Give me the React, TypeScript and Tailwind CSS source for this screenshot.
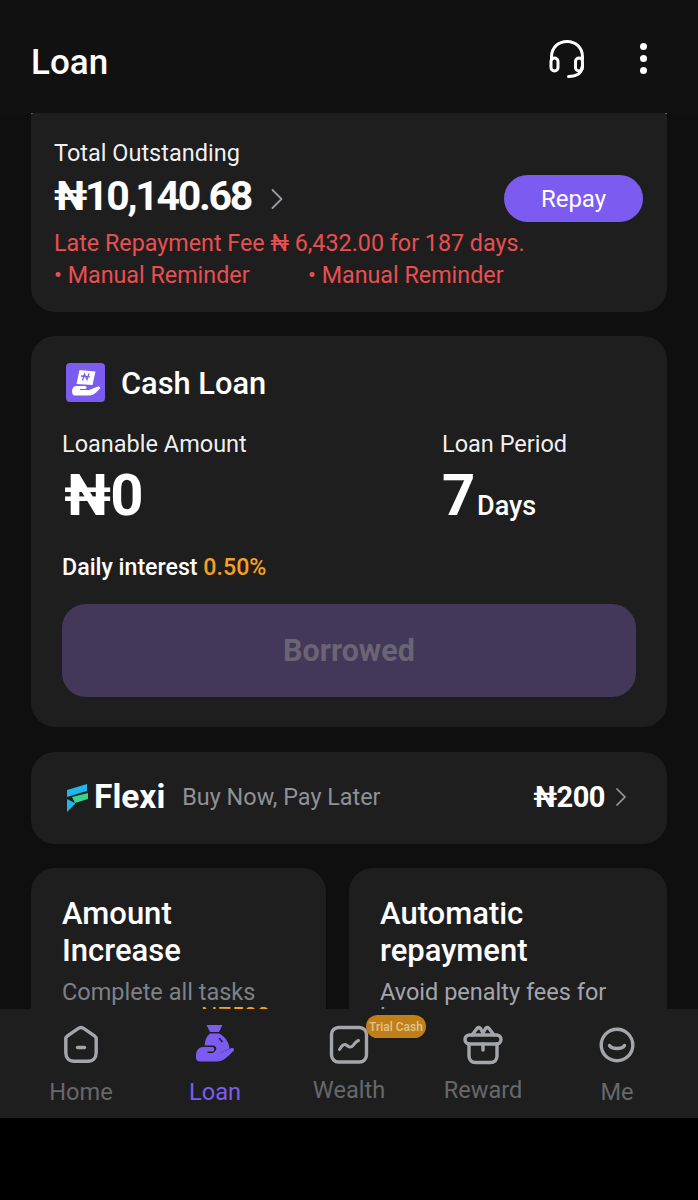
import { ChevronRight } from "lucide-react";

const tabs = [
  { label: "Home", icon: <HomeIcon />, labelClass: "mt-[12px] text-[#66686b]" },
  { label: "Loan", icon: <LoanIcon />, labelClass: "mt-[12px] text-[#7c5cf0]" },
  { label: "Wealth", icon: <WealthIcon />, labelClass: "mt-[10px] text-[#66686b]" },
  { label: "Reward", icon: <RewardIcon />, labelClass: "mt-[10px] text-[#66686b]" },
  { label: "Me", icon: <MeIcon />, labelClass: "mt-[12px] text-[#66686b]" },
];

function HomeIcon() {
  return (
    <svg width="40" height="40" viewBox="0 0 40 40" fill="none" stroke="#a3a6ab" strokeWidth="3.4" strokeLinejoin="round" strokeLinecap="round">
      <path d="M17 3.600a5 5 0 0 1 6 0l10.500 7.200a4 4 0 0 1 1.700 3.400v13.300c0 5.300-3 8.800-8.500 8.800H13.300c-5.500 0-8.500-3.500-8.500-8.800V14.200a4 4 0 0 1 1.700-3.400z" />
      <path d="M16.500 22.500h7" />
    </svg>
  );
}

function LoanIcon() {
  return (
    <svg width="40" height="42" viewBox="0 0 40 42" fill="#7c5cf0">
      <path d="M11.500 1h16l-3.500 7h-9z" />
      <path d="M15 9.500h9c6 3 10 8.500 10.500 15l-9 4.500h-7.500l3-3c1-2-.5-4.500-3-4.500H9.500c.5-5.500 2-9.500 5.500-12z" />
      <path d="M1 31c0-5 3.500-8 7-8h9.500c2.500 0 2.500 4.500 0 4.500H12.500v1.500h13l11-5c2.500-.5 3.500 2 1.500 3.500-5 5-10 10-16 10H5c-2.500 0-4-1.500-4-3.500z" />
      <path d="M24.500 14.500l2.500 3" stroke="#1e1e1e" strokeWidth="1.500" strokeLinecap="round" />
    </svg>
  );
}

function WealthIcon() {
  return (
    <svg width="40" height="40" viewBox="0 0 40 40" fill="none" stroke="#a3a6ab" strokeLinecap="round" strokeLinejoin="round">
      <rect x="2.500" y="2.500" width="35" height="34.500" rx="7" strokeWidth="3.400" />
      <path d="M10.500 24.500c3-5 5-6 7.500-4s4 2.500 6 0 3.500-4.500 5.500-5" strokeWidth="3" />
    </svg>
  );
}

function RewardIcon() {
  return (
    <svg width="40" height="40" viewBox="0 0 40 40" fill="none" stroke="#a3a6ab" strokeWidth="3.400" strokeLinecap="round" strokeLinejoin="round">
      <rect x="2" y="10" width="36" height="9" rx="4.500" />
      <path d="M6 19v12c0 4 2.500 6.500 6.500 6.500h15c4 0 6.500-2.500 6.500-6.500V19" />
      <path d="M9 10l5-6.500c1-1 2.500-1 3.500 0L20 8l2.500-4.500c1-1 2.500-1 3.500 0l5 6.500" />
      <path d="M20 19v6" />
    </svg>
  );
}

function MeIcon() {
  return (
    <svg width="38" height="38" viewBox="0 0 38 38" fill="none" stroke="#a3a6ab" strokeWidth="3.400" strokeLinecap="round">
      <circle cx="19" cy="19" r="15.800" />
      <path d="M11.500 19.500c2.500 4 12.500 4 15 0" />
    </svg>
  );
}

function CashLoanIcon() {
  return (
    <svg width="39" height="39" viewBox="0 0 39 39">
      <rect width="39" height="39" rx="4" fill="#7c5cf0" />
      <path d="M13.500 7l16 1.500-3 13.500-16-1z" fill="#fff" />
      <path d="M16.500 17.500l2-6.500 2.500 5.500 2-6M15 13l9 .8" fill="none" stroke="#7c5cf0" strokeWidth="1.300" />
      <path d="M6 28c0-3 2-5 4.500-5h8.500c2 0 2 3 0 3h-5v1h9l9-3.500c2-.5 3 1.500 1.500 2.500-3 3-6 6.500-10 6.500H8.500C7 32.500 6 30.500 6 28z" fill="#fff" />
    </svg>
  );
}

function FlexiMark() {
  return (
    <svg width="22" height="28" viewBox="0 0 22 28">
      <path d="M1 6l20-6v7L1 13z" fill="#1fb6ea" />
      <path d="M6 13l16-4v6L9 19z" fill="#35d68a" />
      <path d="M1 15l8 4v1L1 28z" fill="#1fb6ea" />
    </svg>
  );
}

function SupportIcon() {
  return (
    <svg width="36" height="38" viewBox="0 0 36 38" fill="none" stroke="#fff" strokeWidth="3" strokeLinecap="round">
      <path d="M2.500 19V17C2.500 7.500 9.500 1.500 18 1.500S33.500 7.500 33.500 17v2" />
      <rect x="2" y="18" width="7" height="13" rx="3.500" />
      <rect x="26.500" y="18" width="7" height="13" rx="3.500" />
      <path d="M33 27c-.5 6-5 9.500-13.500 9.500" />
    </svg>
  );
}

export default function App() {
  return (
    <div className="flex h-[1200px] w-[698px] flex-col overflow-hidden bg-black font-['Roboto',sans-serif]">
      <header className="flex h-[113px] shrink-0 items-center bg-[#111112] pl-[31px] pr-[51px] pt-[13px]">
        <h1 className="flex-1 text-[35px] font-medium leading-[40px] text-white">Loan</h1>
        <div className="mr-[55px] -mt-[9px] flex"><SupportIcon /></div>
        <div className="-mt-[10px] flex flex-col gap-[5px]">
          <span className="h-[7px] w-[7px] rounded-full bg-white" />
          <span className="h-[7px] w-[7px] rounded-full bg-white" />
          <span className="h-[7px] w-[7px] rounded-full bg-white" />
        </div>
      </header>

      <main className="flex h-[896px] shrink-0 flex-col gap-[24px] overflow-hidden bg-[#0f0f10] px-[31px]">
        <section className="relative h-[199px] shrink-0 rounded-b-[24px] bg-[#1e1e1f] pl-[23px] pr-[24px] pt-[26px]">
          <span className="absolute left-0 top-0 h-px w-[2px] bg-[#4a47c8]" />
          <span className="absolute right-0 top-0 h-px w-[2px] bg-[#4a47c8]" />
          <p className="text-[23.500px] leading-[28px] text-white/95">Total Outstanding</p>
          <div className="mt-[4px] flex h-[50px] items-center">
            <span className="text-[41px] font-bold leading-[48px] tracking-[-2.300px] text-white">₦10,140.68</span>
            <ChevronRight className="ml-[8px] mt-[6px] h-[36px] w-[36px] text-[#9a9c9f]" strokeWidth={1.200} />
            <button className="ml-auto mt-[5px] flex h-[47px] w-[139px] items-center justify-center rounded-full bg-[#7c5cf0] text-[24px] text-white">Repay</button>
          </div>
          <p className="mt-[7px] text-[23.300px] leading-[30px] text-[#ea4f50]">Late Repayment Fee ₦ 6,432.00 for 187 days.</p>
          <div className="mt-[2px] flex text-[23.300px] leading-[30px] text-[#ea4f50]">
            <span className="w-[254px]">• Manual Reminder</span>
            <span>• Manual Reminder</span>
          </div>
        </section>

        <section className="h-[391px] shrink-0 rounded-[24px] bg-[#1e1e1f] pl-[31px] pr-[31px] pt-[27px]">
          <div className="flex h-[39px] items-center pl-[4px]">
            <CashLoanIcon />
            <h2 className="ml-[16px] mt-[2px] text-[30.800px] font-medium leading-[36px] text-white">Cash Loan</h2>
          </div>
          <div className="mt-[28px] flex">
            <div className="w-[380px]">
              <p className="text-[23.500px] leading-[28px] text-white/95">Loanable Amount</p>
              <p className="mt-[3px] pl-[2px] text-[58px] font-bold leading-[68px] tracking-[-1px] text-white">₦0</p>
            </div>
            <div>
              <p className="text-[23.500px] leading-[28px] text-white/95">Loan Period</p>
              <p className="mt-[3px] flex items-baseline text-[58px] font-bold leading-[68px] text-white">
                <span className="w-[35px]">7</span>
                <span className="text-[27px] font-medium leading-[30px]">Days</span>
              </p>
            </div>
          </div>
          <p className="mt-[24px] text-[23.200px] font-medium leading-[28px] text-white">
            Daily interest <span className="text-[#f5a020]">0.50%</span>
          </p>
          <button className="mt-[23px] h-[93px] w-full rounded-[24px] bg-[#43385a] text-[30.500px] font-bold text-[#6b6473]">Borrowed</button>
        </section>

        <section className="mt-px flex h-[92px] shrink-0 items-center rounded-[24px] bg-[#1e1e1f] pl-[35px] pr-[30px]">
          <FlexiMark />
          <span className="ml-[6px] -mt-[2px] text-[33.500px] font-bold leading-[36px] text-white">Flexi</span>
          <span className="ml-[17px] -mt-[2px] text-[23.400px] leading-[28px] text-[#8f9195]">Buy Now, Pay Later</span>
          <span className="ml-auto -mt-[2px] text-[29px] font-bold leading-[34px] tracking-[-0.500px] text-white">₦200</span>
          <ChevronRight className="-mt-[2px] h-[32px] w-[32px] text-[#9a9c9f]" strokeWidth={1.300} />
        </section>

        <section className="flex shrink-0 gap-[23px]">
          <div className="h-[240px] w-[295px] rounded-t-[24px] bg-[#1e1e1f] pl-[31px] pt-[27px]">
            <h3 className="text-[31px] font-medium leading-[37px] text-white">Amount<br />Increase</h3>
            <p className="mt-[9px] text-[23.500px] leading-[28px] text-[#7d8288]">Complete all tasks</p>
            <p className="-mt-[3px] pl-[138px] text-[23px] leading-[28px] text-[#f5a020]">₦7500</p>
          </div>
          <div className="h-[240px] w-[318px] rounded-t-[24px] bg-[#1e1e1f] pl-[31px] pt-[27px]">
            <h3 className="text-[31px] font-medium leading-[37px] text-white">Automatic<br />repayment</h3>
            <p className="mt-[9px] text-[23.500px] leading-[28px] text-[#a3a6ab]">Avoid penalty fees for</p>
            <p className="-mt-[3px] text-[23.500px] leading-[28px] text-[#a3a6ab]">late</p>
          </div>
        </section>
      </main>

      <nav className="grid h-[109px] shrink-0 grid-cols-5 bg-[#1e1e1f] px-[14px] pt-[15px]">
        {tabs.map((t) => (
          <div key={t.label} className="relative flex flex-col items-center">
            <div className="flex h-[42px] items-center justify-center">{t.icon}</div>
            <span className={`text-[23.600px] leading-[28px] ${t.labelClass}`}>{t.label}</span>
            {t.label === "Wealth" && (
              <span className="absolute left-[84px] -top-[9px] flex h-[23px] w-[60px] items-center justify-center rounded-full bg-[#c17f18] text-[12px] font-medium text-[#e0c490]">Trial Cash</span>
            )}
          </div>
        ))}
      </nav>
      <div className="flex-1 bg-black" />
    </div>
  );
}
